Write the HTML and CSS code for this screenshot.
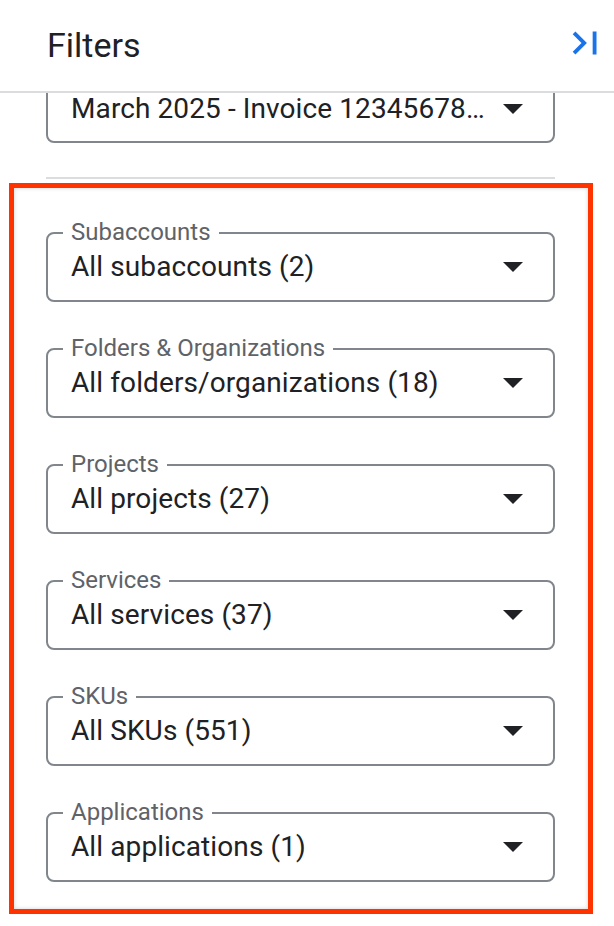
FILE: index.html
```html
<!DOCTYPE html>
<html lang="en">
<head>
<meta charset="utf-8">
<title>Filters</title>
<link rel="stylesheet" href="styles.css">
</head>
<body>
<div class="panel">
  <header class="panel-header">
    <h1 class="panel-title">Filters</h1>
    <button class="collapse-btn" aria-label="Collapse">
      <svg viewBox="0 0 24 24" width="46" height="46"><path d="M5.59 7.41L10.18 12l-4.59 4.59L7 18l6-6-6-6zM16 6h2v12h-2z" fill="#1a73e8"/></svg>
    </button>
  </header>
  <div class="panel-body">
    <div class="invoice-wrap">
      <div class="field field-invoice">
        <span class="field-value invoice-value">March 2025 - Invoice 12345678…</span>
        <svg class="caret" viewBox="0 0 20 10" width="20" height="10"><polygon points="0,0 20,0 10,10" fill="#202124"/></svg>
      </div>
    </div>
    <hr class="divider">
    <section class="highlight">
      <div class="field">
        <span class="field-label">Subaccounts</span>
        <span class="field-value">All subaccounts (2)</span>
        <svg class="caret" viewBox="0 0 20 10" width="20" height="10"><polygon points="0,0 20,0 10,10" fill="#202124"/></svg>
      </div>
      <div class="field">
        <span class="field-label">Folders &amp; Organizations</span>
        <span class="field-value">All folders/organizations (18)</span>
        <svg class="caret" viewBox="0 0 20 10" width="20" height="10"><polygon points="0,0 20,0 10,10" fill="#202124"/></svg>
      </div>
      <div class="field">
        <span class="field-label">Projects</span>
        <span class="field-value">All projects (27)</span>
        <svg class="caret" viewBox="0 0 20 10" width="20" height="10"><polygon points="0,0 20,0 10,10" fill="#202124"/></svg>
      </div>
      <div class="field">
        <span class="field-label">Services</span>
        <span class="field-value">All services (37)</span>
        <svg class="caret" viewBox="0 0 20 10" width="20" height="10"><polygon points="0,0 20,0 10,10" fill="#202124"/></svg>
      </div>
      <div class="field">
        <span class="field-label">SKUs</span>
        <span class="field-value">All SKUs (551)</span>
        <svg class="caret" viewBox="0 0 20 10" width="20" height="10"><polygon points="0,0 20,0 10,10" fill="#202124"/></svg>
      </div>
      <div class="field">
        <span class="field-label">Applications</span>
        <span class="field-value">All applications (1)</span>
        <svg class="caret" viewBox="0 0 20 10" width="20" height="10"><polygon points="0,0 20,0 10,10" fill="#202124"/></svg>
      </div>
    </section>
  </div>
</div>
</body>
</html>
```
FILE: styles.css
```css
* { box-sizing: border-box; }

html, body {
  margin: 0;
  padding: 0;
  background: #ffffff;
}

body {
  font-family: Roboto, "Noto Sans", Arial, sans-serif;
  color: #202124;
  width: 614px;
  height: 926px;
  overflow: hidden;
}

.panel {
  display: flex;
  flex-direction: column;
  height: 926px;
}

.panel-header {
  height: 93px;
  flex: none;
  display: flex;
  align-items: center;
  justify-content: space-between;
  padding: 0 6px 0 47px;
  border-bottom: 2px solid #dadce0;
}

.panel-title {
  margin: 0;
  font-size: 34px;
  font-weight: 400;
  color: #202124;
  letter-spacing: 0;
  margin-bottom: 2px;
}

.collapse-btn {
  border: 0;
  background: none;
  padding: 0;
  width: 46px;
  height: 46px;
  margin-bottom: 5px;
  display: flex;
}

.panel-body {
  flex: 1;
  overflow: hidden;
}

.invoice-wrap {
  padding: 0 59px 0 46px;
  margin-top: -20px;
}

.divider {
  border: 0;
  height: 2px;
  background: #dadce0;
  margin: 34px 59px 4px 46px;
}

.highlight {
  margin: 0 21px 0 9px;
  border: 5px solid #ff3300;
  box-shadow: inset 0 0 4px rgba(0, 0, 0, 0.18);
  padding: 44px 33px 27px 32px;
  display: flex;
  flex-direction: column;
  gap: 46px;
}

.field {
  position: relative;
  height: 70px;
  border: 2px solid #80868b;
  border-radius: 8px;
  display: flex;
  align-items: center;
  justify-content: space-between;
  padding: 0 30px 0 23px;
}

.field-invoice {
  align-items: flex-end;
  padding-bottom: 18px;
}

.field-invoice .caret {
  margin-bottom: 9px;
}

.field-label {
  position: absolute;
  top: -16px;
  left: 15px;
  padding: 0 8px;
  background: #ffffff;
  font-size: 24px;
  line-height: 28px;
  color: #5f6368;
  white-space: nowrap;
}

.field-value {
  font-size: 28px;
  line-height: 32px;
  letter-spacing: 0.1px;
  color: #202124;
  white-space: nowrap;
}

.invoice-value {
  line-height: 28px;
}

.caret {
  flex: none;
  display: block;
}
```
